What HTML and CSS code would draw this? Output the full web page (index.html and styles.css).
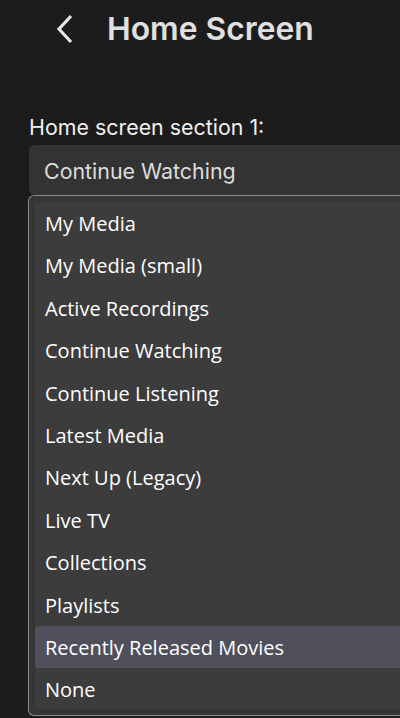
FILE: index.html
```html
<!DOCTYPE html>
<html>
<head>
    <title>Home Screen</title>
    <link rel="stylesheet" href="styles.css">
</head>
<body>
    <div class="header">
        <button class="back">
            <svg width="20" height="30" viewBox="0 0 20 30">
                <path d="M16 2 L4 15 L16 28" fill="none" stroke="#e6e6e6" stroke-width="3.2"/>
            </svg>
        </button>
        <h1>Home Screen</h1>
    </div>

    <div class="field">
        <label>Home screen section 1:</label>
        <div class="select">Continue Watching</div>
        <div class="dropdown">
            <ul class="options">
                <li>My Media</li>
                <li>My Media (small)</li>
                <li>Active Recordings</li>
                <li>Continue Watching</li>
                <li>Continue Listening</li>
                <li>Latest Media</li>
                <li>Next Up (Legacy)</li>
                <li>Live TV</li>
                <li>Collections</li>
                <li>Playlists</li>
                <li class="active">Recently Released Movies</li>
                <li>None</li>
            </ul>
        </div>
    </div>
</body>
</html>
```

FILE: styles.css
```css
body {
    margin: 0;
    background-color: #1c1c1c;
    color: #e6e6e6;
    font-family: 'Inter', sans-serif;
    height: 718px;
    overflow: hidden;
}

.header {
    display: flex;
    align-items: center;
    height: 57px;
    padding-left: 55px;
}

.back {
    background: none;
    border: none;
    padding: 0;
    width: 52px;
    display: flex;
    align-items: center;
}

h1 {
    margin: 0;
    font-size: 31.8px;
    font-weight: 600;
    color: #e0e0e0;
}

.field {
    margin-top: 55px;
    padding-left: 29px;
}

label {
    display: block;
    font-size: 21.4px;
    line-height: 30px;
    color: #f0f0f0;
}

.select {
    height: 50px;
    margin-top: 3px;
    background-color: #333333;
    border-radius: 6px 0 0 6px;
    padding-left: 15px;
    font-size: 21.4px;
    line-height: 52px;
    color: #dcdcdc;
}

.dropdown {
    margin-left: -1px;
    margin-top: 0;
    height: 521px;
    box-sizing: border-box;
    border: 1px solid #8a8a8a;
    border-right: none;
    border-radius: 6px 0 0 6px;
    background-color: #353535;
    padding: 6px 0 6px 6px;
}

.options {
    list-style: none;
    margin: 0;
    padding: 0;
    background-color: #3c3c3c;
    height: 100%;
    font-family: 'Open Sans', sans-serif;
}

.options li {
    height: 42.4px;
    line-height: 44px;
    padding-left: 10px;
    font-size: 20px;
    color: #ffffff;
}

.options li.active {
    background-color: #50505c;
    border-radius: 3px 0 0 3px;
}
```
